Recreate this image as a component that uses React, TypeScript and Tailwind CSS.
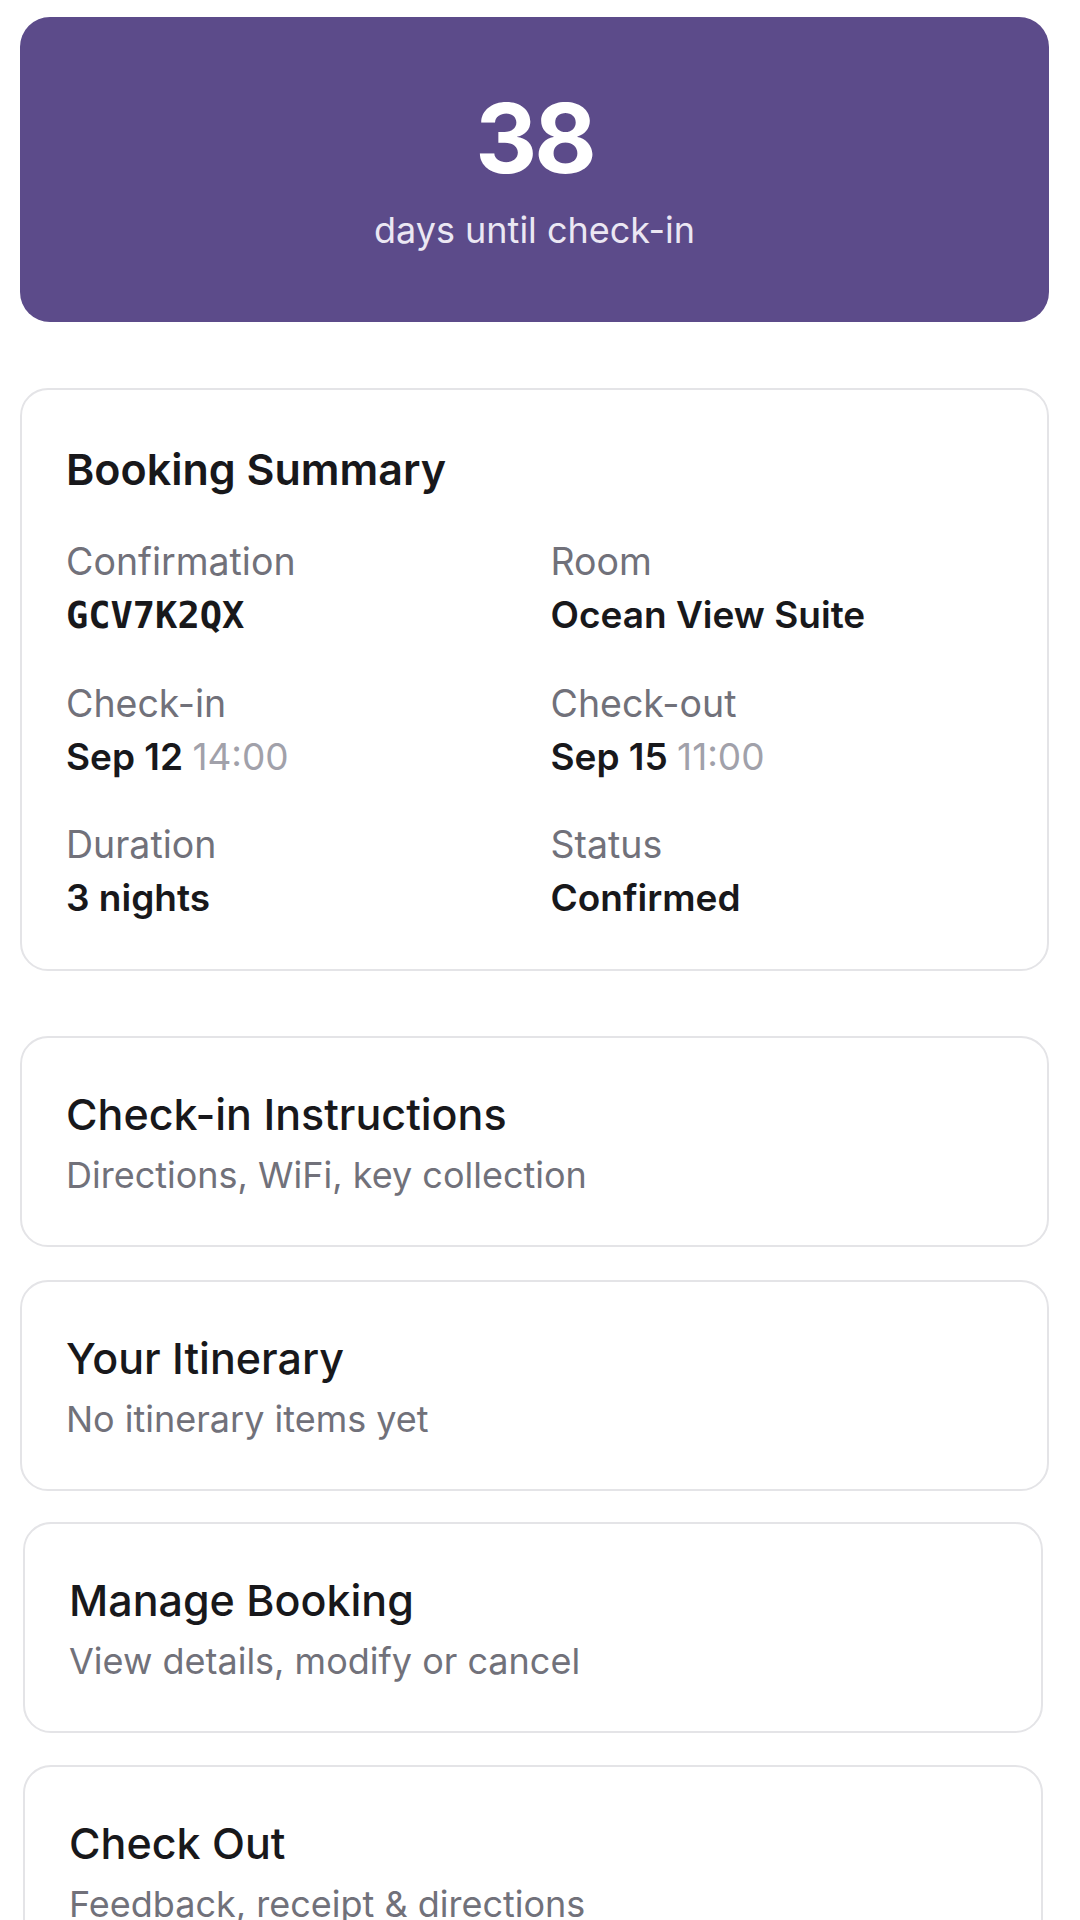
import React from "react";

const sans = { fontFamily: "Inter, 'Noto Sans', sans-serif" };

function Field({ label, children }: { label: string; children: React.ReactNode }) {
  return (
    <div className="flex flex-col">
      <div className="text-[37.5px] leading-[48px] text-[#71717a]">{label}</div>
      <div className="text-[37px] leading-[58px] text-[#18181b] font-semibold">{children}</div>
    </div>
  );
}

function LinkCard({ title, sub, inset, className }: { title: string; sub: string; inset?: boolean; className?: string }) {
  return (
    <div
      className={
        "rounded-[28px] border-2 border-[#e4e4e7] bg-white pt-[48px] pb-[46px] px-[44px] " +
        (inset ? "ml-[3px] w-[1020px] " : "w-full ") +
        (className ?? "")
      }
    >
      <div className="text-[43px] leading-[56px] font-medium text-[#18181b]">{title}</div>
      <div className="mt-[9px] text-[36px] leading-[48px] text-[#71717a]">{sub}</div>
    </div>
  );
}

export default function App() {
  return (
    <div className="min-h-[1920px] bg-white overflow-hidden" style={sans}>
      <div className="ml-[20px] w-[1029px] pt-[17px] flex flex-col">
        <div className="rounded-[30px] bg-[#5c4b8a] pt-[73px] pb-[68px] flex flex-col items-center">
          <div className="text-[96px] leading-[96px] font-bold text-white tracking-[-3px]">38</div>
          <div className="mt-[20px] text-[36px] leading-[48px] text-[#ebe7f3]">days until check-in</div>
        </div>

        <div className="mt-[66px] rounded-[28px] border-2 border-[#e4e4e7] bg-white pt-[51px] pb-[42px] px-[44px]">
          <div className="text-[43px] leading-[56px] font-semibold text-[#18181b]">Booking Summary</div>
          <div className="mt-[41px] grid grid-cols-2 gap-x-[32px] gap-y-[35px]">
            <Field label="Confirmation">
              <span className="font-bold text-[37px]" style={{ fontFamily: "'DejaVu Sans Mono', 'Liberation Mono', monospace" }}>
                GCV7K2QX
              </span>
            </Field>
            <Field label="Room">Ocean View Suite</Field>
            <Field label="Check-in">
              Sep 12 <span className="font-normal text-[#a1a1aa]">14:00</span>
            </Field>
            <Field label="Check-out">
              Sep 15 <span className="font-normal text-[#a1a1aa]">11:00</span>
            </Field>
            <Field label="Duration">3 nights</Field>
            <Field label="Status">Confirmed</Field>
          </div>
        </div>

        <div className="mt-[65px] flex flex-col">
          <LinkCard title="Check-in Instructions" sub="Directions, WiFi, key collection" />
          <LinkCard title="Your Itinerary" sub="No itinerary items yet" className="mt-[33px]" />
          <LinkCard title="Manage Booking" sub="View details, modify or cancel" inset className="mt-[31px]" />
          <LinkCard title="Check Out" sub="Feedback, receipt & directions" inset className="mt-[32px]" />
        </div>
      </div>
    </div>
  );
}
